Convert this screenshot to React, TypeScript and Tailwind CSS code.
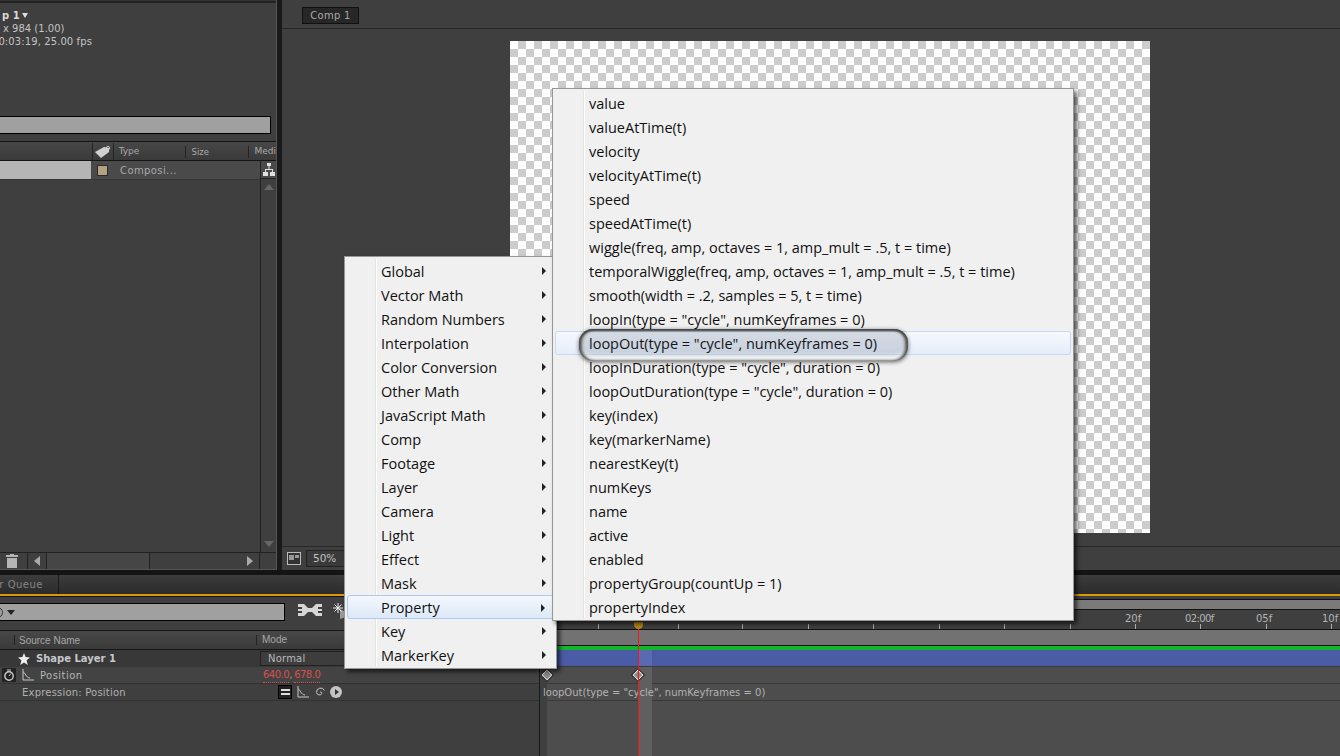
const seg = 'font-["Open_Sans",sans-serif]'

const globalItems = ['Global', 'Vector Math', 'Random Numbers', 'Interpolation', 'Color Conversion', 'Other Math', 'JavaScript Math', 'Comp', 'Footage', 'Layer', 'Camera', 'Light', 'Effect', 'Mask', 'Property', 'Key', 'MarkerKey']

const propertyItems = [
  'value',
  'valueAtTime(t)',
  'velocity',
  'velocityAtTime(t)',
  'speed',
  'speedAtTime(t)',
  'wiggle(freq, amp, octaves = 1, amp_mult = .5, t = time)',
  'temporalWiggle(freq, amp, octaves = 1, amp_mult = .5, t = time)',
  'smooth(width = .2, samples = 5, t = time)',
  'loopIn(type = "cycle", numKeyframes = 0)',
  'loopOut(type = "cycle", numKeyframes = 0)',
  'loopInDuration(type = "cycle", duration = 0)',
  'loopOutDuration(type = "cycle", duration = 0)',
  'key(index)',
  'key(markerName)',
  'nearestKey(t)',
  'numKeys',
  'name',
  'active',
  'enabled',
  'propertyGroup(countUp = 1)',
  'propertyIndex',
]

const ticks = [598, 678, 742, 808, 873, 939, 1004, 1070, 1135, 1200, 1266, 1331]

function Arrow({ left }: { left?: boolean }) {
  return (
    <svg width="8" height="10" viewBox="0 0 8 10" className="shrink-0">
      <path d={left ? 'M7 0 L1 5 L7 10 Z' : 'M1 0 L7 5 L1 10 Z'} fill="#aaa" />
    </svg>
  )
}

function GraphIcon({ className }: { className: string }) {
  return (
    <svg width="12" height="12" viewBox="0 0 12 12" className={className} fill="none" stroke="#c8c8c8">
      <path d="M1 0 V11 H12 M1 3 C3 3 4 9 8 9" />
    </svg>
  )
}

function ProjectPanel() {
  return (
    <div className="flex h-full w-[277px] shrink-0 flex-col overflow-hidden border-b border-r border-[#555] bg-[#3f3f3f] font-['DejaVu_Sans',sans-serif] text-[10px] text-[#c4c4c4]">
      <div className="h-[3px] shrink-0 border-b-2 border-[#222] bg-[#333]" />
      <div className="relative h-[110px] shrink-0 leading-[13px]">
        <div className="absolute left-[2px] top-[6px] whitespace-nowrap font-bold text-[#d8d8d8]">p 1</div>
        <div className="absolute left-[22px] top-[10px] h-0 w-0 border-x-[3px] border-t-[5px] border-x-transparent border-t-[#ddd]" />
        <div className="absolute left-[3px] top-[19px] whitespace-nowrap">x 984 (1.00)</div>
        <div className="absolute right-[184px] top-[32px] whitespace-nowrap tracking-[0.1px]">00:03:19, 25.00 fps</div>
      </div>
      <div className="mr-[5px] mt-[3px] h-[18px] shrink-0 border border-l-0 border-black bg-[#a0a0a0]" />
      <div className="mt-[7px] flex h-[20px] shrink-0 items-center border-y border-[#151515] bg-gradient-to-b from-[#474747] to-[#3a3a3a] pl-[92px] pt-[1px] text-[9px] text-[#a9a9a9]">
        <div className="flex h-full w-[22px] items-center justify-center border-x border-[#222]">
          <svg width="18" height="14" viewBox="0 0 18 14">
            <path d="M1 7 L10 2 L15 3 L15 7 L7 13 Z" fill="#d0d0d0" />
            <circle cx="14" cy="3" r="1.6" fill="none" stroke="#d0d0d0" />
          </svg>
        </div>
        <div className="w-[73px] pl-[5px]">Type</div>
        <div className="h-[12px] w-[65px] border-x border-[#222] pl-[5px] text-[8.5px] leading-[12px]">Size</div>
        <div className="pl-[5px]">Medi</div>
      </div>
      <div className="flex min-h-0 flex-1">
        <div className="flex min-w-0 flex-1 flex-col">
          <div className="flex h-[19px] items-center border-b border-[#353535] bg-[#4a4a4a]">
            <div className="h-full w-[91px] bg-[#b5b5b5]" />
            <div className="ml-[6px] h-[11px] w-[11px] border border-[#2a2a2a] bg-[#b2a183]" />
            <div className="ml-[12px] tracking-[0.4px] text-[#a8a8a8]">Composi...</div>
          </div>
        </div>
        <div className="flex w-[16px] flex-col border-l border-[#222]">
          <div className="flex h-[18px] items-center justify-center border-b border-[#222] bg-[#4a4a4a]">
            <svg width="14" height="13" viewBox="0 0 14 13" fill="#e0e0e0">
              <path d="M5 0h4v3H5z M1 9h5v4H1z M8 9h5v4H8z M3 6h8v1H3z M6.5 3h1v3h-1z M3 6h1v3H3z M10 6h1v3h-1z" />
            </svg>
          </div>
          <div className="flex flex-1 flex-col items-center justify-between py-[5px]">
            <div className="h-0 w-0 border-x-[5px] border-b-[6px] border-x-transparent border-b-[#666]" />
            <div className="h-0 w-0 border-x-[5px] border-t-[6px] border-x-transparent border-t-[#666]" />
          </div>
        </div>
      </div>
      <div className="flex h-[17px] shrink-0 items-center border-t border-[#222] pl-[6px]">
        <svg width="12" height="14" viewBox="0 0 12 14" fill="#b5b5b5">
          <path d="M4 0h4v1h4v2H0V1h4z M1 4h10v10H1z" />
        </svg>
        <div className="ml-[9px] flex h-full w-[20px] items-center justify-center border-x border-[#222]">
          <Arrow left />
        </div>
        <div className="h-full w-[103px] border-r border-[#222] bg-[#464646]" />
        <div className="flex h-full w-[110px] items-center justify-end border-r border-[#222] pr-[5px]">
          <Arrow />
        </div>
      </div>
    </div>
  )
}

function CompPanel() {
  return (
    <div className="flex h-full min-w-0 flex-1 flex-col bg-[#3f3f3f] font-['DejaVu_Sans',sans-serif] text-[10px] text-[#c0c0c0]">
      <div className="flex h-[29px] shrink-0 items-start border-b border-[#272727] pl-[20px] pt-[7px]">
        <div className="flex h-[17px] w-[57px] items-center justify-center border border-[#111] bg-[#272727] tracking-[0.3px] text-[#a8a8a8]">Comp 1</div>
      </div>
      <div className="min-h-0 flex-1 pl-[228px] pt-[12px]">
        <div className="h-[492px] w-[640px] bg-white bg-[repeating-conic-gradient(#cccccc_0_25%,#ffffff_0_50%)] bg-[length:16px_16px]" />
      </div>
      <div className="flex h-[24px] shrink-0 items-center border-t border-[#272727] pl-[5px]">
        <div className="flex h-[13px] w-[14px] items-center justify-center border border-[#bbb] bg-[#333]">
          <div className="flex h-[7px] w-[10px] gap-[1px]">
            <div className="h-[5px] w-[5px] bg-[#999]" />
            <div className="h-[3px] w-[4px] bg-[#999]" />
          </div>
        </div>
        <div className="ml-[5px] flex h-[17px] w-[40px] items-center border border-[#222] bg-[#3a3a3a] pl-[6px] text-[10.5px]">50%</div>
      </div>
    </div>
  )
}

function Timeline() {
  return (
    <div className="flex min-h-0 flex-1 flex-col font-['DejaVu_Sans',sans-serif] text-[10px] text-[#b8b8b8]">
      <div className="flex h-[19px] shrink-0 bg-gradient-to-b from-[#3c3c3c] to-[#2b2b2b]">
        <div className="flex w-[59px] items-center justify-end whitespace-nowrap border-r border-[#1a1a1a] pr-[15px] tracking-[0.5px] text-[#858585]">er Queue</div>
      </div>
      <div className="h-[2px] shrink-0 bg-[#d99a0c]" />
      <div className="relative flex min-h-0 flex-1">
        <div className="flex w-[540px] shrink-0 flex-col border-r border-[#1a1a1a] bg-[#3f3f3f]">
          <div className="flex h-[34px] shrink-0 items-start border-t border-[#111] pt-[6px]">
            <div className="flex h-[18px] w-[285px] items-center border border-l-0 border-black bg-[#a0a0a0] text-[#222]">
              <div className="ml-[-8px] h-[11px] w-[11px] rounded-full border border-[#333]" />
              <div className="ml-[4px] h-0 w-0 border-x-[4px] border-t-[5px] border-x-transparent border-t-[#222]" />
            </div>
            <svg width="26" height="14" viewBox="0 0 26 14" className="ml-[12px]" fill="#d5d5d5">
              <path d="M1 1h6l4 4h4l4-4h6v3h-4v2h4v2h-4v2h4v3h-6l-4-4h-4l-4 4H1v-3h4V8H1V6h4V4H1z" />
            </svg>
            <svg width="14" height="16" viewBox="0 0 14 16" className="ml-[10px]">
              <path d="M7 6 l6 3 v5 l-6 2 z" fill="#999" />
              <path d="M5 0 V10 M0 5 H10 M1.5 1.5 L8.5 8.5 M8.5 1.5 L1.5 8.5" stroke="#eee" />
            </svg>
          </div>
          <div className="flex h-[20px] shrink-0 items-center border-y border-[#161616] bg-gradient-to-b from-[#484848] to-[#3a3a3a] font-['Liberation_Sans',sans-serif] text-[10px] text-[#a8a8a8]">
            <div className="h-[10px] w-[15px] border-r border-[#222]" />
            <div className="w-[241px] pl-[4px]">Source Name</div>
            <div className="h-[10px] border-l border-[#222] pl-[5px] leading-[10px]">Mode</div>
          </div>
          <div className="flex h-[17px] shrink-0 items-center bg-[#383838]">
            <svg width="12" height="12" viewBox="0 0 12 12" fill="#eee" className="ml-[18px]">
              <path d="M6 0 L7.6 4 L12 4.4 L8.6 7.2 L9.7 12 L6 9.4 L2.3 12 L3.4 7.2 L0 4.4 L4.4 4 Z" />
            </svg>
            <div className="ml-[6px] w-[224px] text-[10px] font-bold text-[#c6c8cc]">Shape Layer 1</div>
            <div className="flex h-[15px] w-[90px] items-center border border-[#222] bg-[#3d3d3d] pl-[7px] text-[10px] tracking-[0.2px]">Normal</div>
          </div>
          <div className="flex h-[17px] shrink-0 items-center border-b border-[#323232] bg-[#434343]">
            <div className="ml-[2px] flex h-[14px] w-[14px] items-center justify-center border border-[#222] bg-[#222]">
              <svg width="12" height="12" viewBox="0 0 12 12" fill="none" stroke="#ccc">
                <circle cx="6" cy="7" r="4.2" strokeWidth="1.4" />
                <path d="M4 1 H8 M6 7 L8 4.5" />
              </svg>
            </div>
            <GraphIcon className="ml-[6px]" />
            <div className="ml-[6px] w-[223px] tracking-[0.45px] text-[#b4b4b4]">Position</div>
            <div className="flex text-[10px] tracking-[-0.5px] text-[#d94f4f]">
              <span className="border-b border-dotted border-[#d94f4f]">640.0</span>
              <span className="w-[5px] text-[#c08a2a]">,</span>
              <span className="border-b border-dotted border-[#d94f4f]">678.0</span>
            </div>
          </div>
          <div className="flex h-[17px] shrink-0 items-center border-b border-[#323232]">
            <div className="ml-[22px] w-[256px] tracking-[0.2px] text-[#b0b0b0]">Expression: Position</div>
            <div className="flex h-[14px] w-[14px] items-center justify-center border border-black bg-[#222]">
              <div className="h-[6px] w-[9px] border-y-2 border-[#ddd]" />
            </div>
            <GraphIcon className="ml-[5px]" />
            <svg width="12" height="12" viewBox="0 0 12 12" className="ml-[5px]" fill="none" stroke="#c8c8c8">
              <path d="M6 6 a1.5 1.5 0 0 1 2 1.5 a3 3 0 0 1 -5.5 -1 a4.2 4.2 0 0 1 8 -2" />
            </svg>
            <div className="ml-[4px] flex h-[12px] w-[12px] items-center justify-center rounded-full bg-[#c4c4c4]">
              <div className="ml-[1px] h-0 w-0 border-y-[3px] border-l-[4px] border-y-transparent border-l-[#333]" />
            </div>
          </div>
        </div>

        <div className="flex min-w-0 flex-1 flex-col bg-[#3f3f3f]">
          <div className="h-[4px] shrink-0 border-b border-[#111]" />
          <div className="h-[9px] shrink-0 bg-[#7a7a7a]" />
          <div className="relative h-[20px] shrink-0 border-t border-[#111] bg-[#3f3f3f] text-[#b4b4b4]">
            {ticks.map((x) => (
              <div key={x} className="absolute bottom-0 h-[5px] w-px bg-[#aaa]" style={{ left: x - 540 }} />
            ))}
            <span className="absolute left-[585px] top-[1px]">20f</span>
            <span className="absolute left-[645px] top-[1px] tracking-[-0.6px]">02:00f</span>
            <span className="absolute left-[716px] top-[1px]">05f</span>
            <span className="absolute left-[782px] top-[1px]">10f</span>
          </div>
          <div className="h-[16px] shrink-0 border-t border-[#111] bg-[#727272]" />
          <div className="h-[5px] shrink-0 border-t border-[#111] bg-[#12b62d]" />
          <div className="relative h-[17px] shrink-0 border-b border-[#3a3a3a] bg-[#4b5ca6]">
            <div className="absolute inset-y-0 left-[98px] w-[14px] bg-[#5a6ab0]" />
          </div>
          <div className="relative min-h-0 flex-1 bg-[#3f3f3f] pl-[7px]">
            <div className="h-full bg-[#4d4d4d]">
              <div className="h-[17px] border-b border-[#3a3a3a]" />
              <div className="h-[17px] border-b border-[#3a3a3a]" />
            </div>
            <div className="absolute inset-y-0 left-[98px] w-[14px] bg-[#5f5f5f]" />
            <div className="absolute left-[3px] top-[18px] whitespace-nowrap text-[#b2b2b2]">loopOut(type = "cycle", numKeyframes = 0)</div>
            <div className="absolute left-[3px] top-[4px] h-[8px] w-[8px] rotate-45 border border-[#ddd] bg-[#888] outline outline-1 outline-[#2a2a2a]" />
            <div className="absolute left-[94px] top-[4px] h-[8px] w-[8px] rotate-45 border border-[#eee] bg-[#888] outline outline-1 outline-[#2a2a2a]" />
          </div>
        </div>

        {/* playhead */}
        <div className="absolute bottom-0 left-[638px] top-[32px] w-px bg-[#ff1414]" />
        <div className="absolute left-[634px] top-[26px] h-[7px] w-[9px] rounded-b-full bg-[#b58512]" />
      </div>
    </div>
  )
}

function GlobalMenu() {
  return (
    <div className={`absolute left-[344px] top-[256px] w-[213px] border border-[#979797] bg-[#f0f0f0] px-[2px] pb-[1px] pt-[2px] text-[14.5px] text-[#111] shadow-[3px_3px_4px_rgba(0,0,0,0.6)] ${seg}`}>
      <div className="absolute bottom-[2px] left-[30px] top-[2px] w-[2px] border-r border-white bg-[#e2e3e3]" />
      {globalItems.map((item) => (
        <div
          key={item}
          className={`relative flex h-[24px] items-center whitespace-nowrap rounded-[3px] pr-[8px] pt-[2px] ${
            item === 'Property' ? 'border border-[#aeccf0] bg-gradient-to-b from-[#f3f7fc] to-[#dde9f8] pl-[33px]' : 'pl-[34px]'
          }`}
        >
          {item}
          <div className="absolute right-[8px] top-[8px] h-0 w-0 border-y-[4px] border-l-[4px] border-y-transparent border-l-[#222]" />
        </div>
      ))}
    </div>
  )
}

function PropertyMenu() {
  return (
    <div className={`absolute left-[552px] top-[88px] w-[522px] border border-[#979797] bg-[#f0f0f0] px-[2px] pb-[1px] pt-[2px] text-[14.5px] text-[#111] shadow-[3px_3px_4px_rgba(0,0,0,0.6)] ${seg}`}>
      <div className="absolute bottom-[2px] left-[30px] top-[2px] w-[2px] border-r border-white bg-[#e2e3e3]" />
      {propertyItems.map((item) => (
        <div
          key={item}
          className={`relative flex h-[24px] items-center whitespace-nowrap rounded-[3px] pt-[2px] ${
            item.startsWith('loopOut(') ? 'border border-[#c4dbf3] bg-gradient-to-b from-[#f6f9fd] to-[#e4eef9] pl-[33px]' : 'pl-[34px]'
          }`}
        >
          {item}
        </div>
      ))}
      {/* hand-drawn callout around the chosen item */}
      <div className="absolute left-[26px] top-[240px] h-[32px] w-[329px] rounded-[14px] bg-[#20304a]/15 shadow-[0_1px_4px_rgba(0,0,0,0.6),inset_0_2px_2px_#444,inset_3px_0_3px_#555,inset_-3px_0_3px_#555,inset_0_-5px_4px_rgba(255,255,255,0.85)]" />
    </div>
  )
}

export default function App() {
  return (
    <div className="relative flex h-[756px] w-[1340px] flex-col overflow-hidden bg-[#1a1a1a]">
      <div className="flex h-[570px] shrink-0 gap-[5px]">
        <ProjectPanel />
        <CompPanel />
      </div>
      <div className="h-[5px] shrink-0 bg-[#141414]" />
      <Timeline />
      <GlobalMenu />
      <PropertyMenu />
    </div>
  )
}
